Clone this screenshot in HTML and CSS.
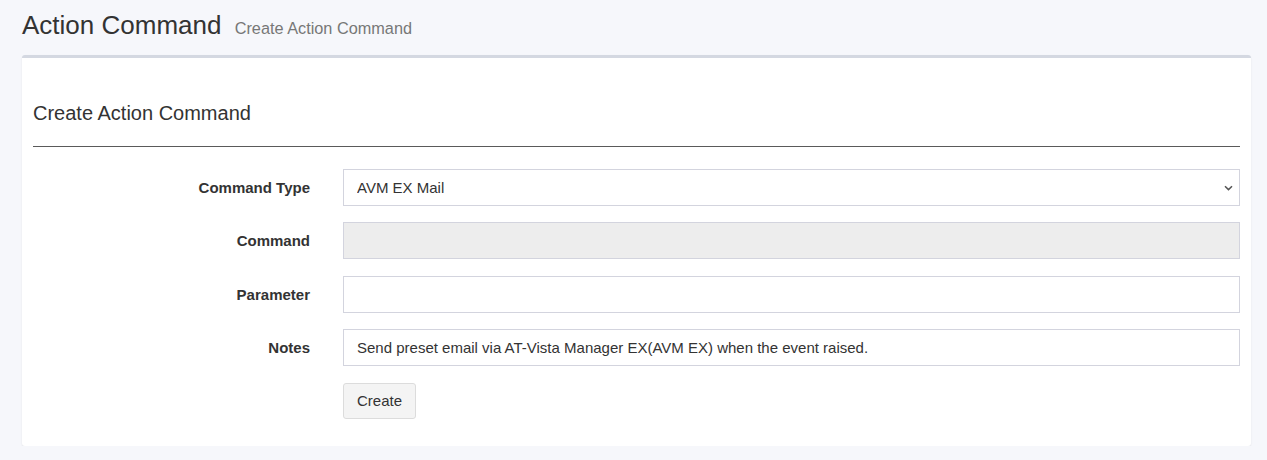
FILE: index.html
```html
<!DOCTYPE html>
<html lang="en">

<head>
    <meta charset="UTF-8">
    <meta name="viewport" content="width=device-width, initial-scale=1.0">
    <title>Action Command</title>
    <link rel="stylesheet" href="styles.css">
</head>

<body>
    <section class="content-header">
        <h1>Action Command <small>Create Action Command</small></h1>
    </section>
    <section class="content">
        <div class="box">
            <h3 class="box-title">Create Action Command</h3>
            <hr class="box-rule">
            <form class="form-horizontal">
                <div class="form-group">
                    <label class="control-label">Command Type</label>
                    <div class="select-wrap">
                        <select class="form-control">
                            <option>AVM EX Mail</option>
                        </select>
                        <svg class="caret" width="9" height="6" viewBox="0 0 9 6">
                            <path d="M1 1.2 L4.5 4.6 L8 1.2" fill="none" stroke="#555" stroke-width="1.5"/>
                        </svg>
                    </div>
                </div>
                <div class="form-group">
                    <label class="control-label">Command</label>
                    <input class="form-control" type="text" disabled>
                </div>
                <div class="form-group">
                    <label class="control-label">Parameter</label>
                    <input class="form-control" type="text">
                </div>
                <div class="form-group">
                    <label class="control-label">Notes</label>
                    <input class="form-control" type="text"
                        value="Send preset email via AT-Vista Manager EX(AVM EX) when the event raised.">
                </div>
                <div class="form-group">
                    <span></span>
                    <div><button class="btn" type="button">Create</button></div>
                </div>
            </form>
        </div>
    </section>
</body>

</html>
```

FILE: styles.css
```css
* {
    box-sizing: border-box;
}

body {
    margin: 0;
    background: #f6f7fb;
    color: #333;
    font-family: "Liberation Sans", Arial, sans-serif;
    font-size: 15px;
}

.content-header {
    padding: 9px 22px 0;
}

.content-header h1 {
    margin: 0;
    font-size: 26px;
    font-weight: normal;
    line-height: 32px;
}

.content-header small {
    margin-left: 6px;
    font-size: 16.3px;
    color: #777;
}

.content {
    padding: 11px 16px 0 22px;
}

.box {
    background: #fff;
    border-top: 3px solid #d4d8e1;
    border-radius: 3px;
    box-shadow: 0 1px 2px rgba(0, 0, 0, 0.08);
    padding: 0 11px 27px;
}

.box-title {
    margin: 0;
    padding-top: 43px;
    font-size: 20px;
    font-weight: normal;
    line-height: 24px;
}

.box-rule {
    margin: 21px 0 22px;
    border: 0;
    border-top: 1px solid #5a5a5a;
}

.form-group {
    display: grid;
    grid-template-columns: 277px 1fr;
    column-gap: 33px;
    align-items: center;
    margin-bottom: 16.4px;
}

.form-group:last-child {
    margin-bottom: 0;
}

.control-label {
    text-align: right;
    font-weight: bold;
}

.form-control {
    width: 100%;
    height: 37px;
    padding: 0 13px;
    border: 1px solid #d3d4de;
    border-radius: 0;
    background: #fff;
    color: #333;
    font-family: inherit;
    font-size: 15px;
}

.form-control:disabled {
    background: #ededed;
}

.select-wrap {
    position: relative;
}

select.form-control {
    appearance: none;
}

.caret {
    position: absolute;
    right: 7px;
    top: 16px;
}

.btn {
    height: 36px;
    padding: 0 13px;
    background: #f4f4f4;
    border: 1px solid #dcdcdc;
    border-radius: 3px;
    color: #333;
    font-family: inherit;
    font-size: 15px;
}
```
